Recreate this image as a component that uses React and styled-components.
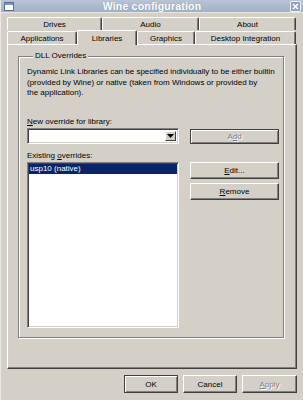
import React from 'react';
import styled, { createGlobalStyle } from 'styled-components';

const GlobalStyle = createGlobalStyle`
  html, body { margin: 0; padding: 0; background: #d4d0c8; }
  * { box-sizing: border-box; }
`;

const FONT = '"Liberation Sans", Arial, sans-serif';

function App() {
    return (
        <>
            <GlobalStyle />
            <Window>
                <TitleBar>
                    <WinIcon>
                        <svg width="10" height="9" viewBox="0 0 10 9">
                            <rect x="0.5" y="0.5" width="9" height="8" fill="#fff" stroke="#5a6f94" />
                            <rect x="1" y="1" width="8" height="2" fill="#7e93b8" />
                        </svg>
                    </WinIcon>
                    <Title>Wine configuration</Title>
                    <CloseBox>
                        <svg width="9" height="9" viewBox="0 0 9 9">
                            <path d="M2 2 L7 7 M7 2 L2 7" stroke="#fff" strokeWidth="1.6" />
                        </svg>
                    </CloseBox>
                </TitleBar>

                <Body>
                    <TabRow>
                        <Tab $w={95}>Drives</Tab>
                        <Tab $w={97}>Audio</Tab>
                        <Tab $w={97}>About</Tab>
                    </TabRow>
                    <TabRow $second>
                        <Tab $w={70}>Applications</Tab>
                        <Tab $w={60} $active>Libraries</Tab>
                        <Tab $w={58}>Graphics</Tab>
                        <Tab $w={101}>Desktop Integration</Tab>
                    </TabRow>

                    <Panel>
                        <GroupBox>
                            <Legend>DLL Overrides</Legend>
                            <Description>
                                Dynamic Link Libraries can be specified individually to be either builtin<br />
                                (provided by Wine) or native (taken from Windows or provided by<br />
                                the application).
                            </Description>

                            <FieldLabel $top={18}><u>N</u>ew override for library:</FieldLabel>
                            <FormRow>
                                <Combo>
                                    <ComboInput />
                                    <ComboArrow>
                                        <svg width="7" height="4" viewBox="0 0 7 4">
                                            <path d="M0 0 H7 L3.5 4 Z" fill="#000" />
                                        </svg>
                                    </ComboArrow>
                                </Combo>
                                <Button $h={15} $default $disabled>A<u>d</u>d</Button>
                            </FormRow>

                            <FieldLabel $top={7}>Existing <u>o</u>verrides:</FieldLabel>
                            <ListRow>
                                <ListBox>
                                    <ListItem $selected>usp10 (native)</ListItem>
                                </ListBox>
                                <ButtonColumn>
                                    <Button $h={17}><u>E</u>dit...</Button>
                                    <Button $h={17}><u>R</u>emove</Button>
                                </ButtonColumn>
                            </ListRow>
                        </GroupBox>
                    </Panel>

                    <Footer>
                        <Button $w={54} $h={18} $default>OK</Button>
                        <Button $w={54} $h={18}>Cancel</Button>
                        <Button $w={55} $h={18} $disabled><u>A</u>pply</Button>
                    </Footer>
                </Body>
            </Window>
        </>
    );
}

export default App;

// Style Components

const Window = styled.div`
    width: 303px;
    height: 400px;
    background: #d4d0c8;
    display: flex;
    flex-direction: column;
    font-family: ${FONT};
    font-size: 8px;
    color: #000;
    border-left: 1px solid #ece9e2;
    overflow: hidden;
`

const TitleBar = styled.div`
    height: 13px;
    display: flex;
    align-items: center;
    padding: 0 2px 0 3px;
    background: linear-gradient(#b9c5d6, #9fb0c8);
    border-bottom: 1px solid #e8e6e0;
`

const WinIcon = styled.div`
    width: 10px;
    display: flex;
`

const Title = styled.div`
    flex: 1;
    text-align: center;
    color: #fff;
    font-weight: bold;
    font-size: 10.5px;
    letter-spacing: 0.2px;
    text-shadow: 0 0 1px #7d8da6;
`

const CloseBox = styled.div`
    width: 11px;
    height: 11px;
    display: flex;
    align-items: center;
    justify-content: center;
    background: #8ea2c4;
    border: 1px solid #eef2f8;
    border-radius: 1px;
`

const Body = styled.div`
    flex: 1;
    display: flex;
    flex-direction: column;
    padding: 4px 6px 0 6px;
`

const TabRow = styled.div`
    display: flex;
    height: ${p => (p.$second ? 14 : 13)}px;
    align-items: flex-end;
`

const Tab = styled.div`
    width: ${p => p.$w}px;
    height: ${p => (p.$active ? 15 : 13)}px;
    margin-bottom: ${p => (p.$active ? -1 : 0)}px;
    position: relative;
    z-index: ${p => (p.$active ? 2 : 1)};
    display: flex;
    align-items: center;
    justify-content: center;
    background: #d4d0c8;
    border-top: 1px solid #fff;
    border-left: 1px solid #fff;
    border-right: 1px solid #404040;
    box-shadow: inset -1px 0 #808080;
    border-radius: 2px 2px 0 0;
    white-space: nowrap;
`

const Panel = styled.div`
    width: 290px;
    height: 325px;
    display: flex;
    flex-direction: column;
    padding: 11px 12px 30px 10px;
    border-top: 1px solid #fff;
    border-left: 1px solid #fff;
    border-right: 1px solid #404040;
    border-bottom: 1px solid #404040;
    box-shadow: inset -1px -1px #808080;
`

const GroupBox = styled.div`
    flex: 1;
    padding: 0 5px 0 8px;
    border: 1px solid #808080;
    box-shadow: 1px 1px #fff, inset 1px 1px #fff;
    display: flex;
    flex-direction: column;
`

const Legend = styled.div`
    align-self: flex-start;
    margin: -6px 0 0 6px;
    padding: 0 2px;
    height: 10px;
    line-height: 10px;
    background: #d4d0c8;
`

const Description = styled.p`
    margin: 6px 0 0 0;
    line-height: 10.5px;
    height: 32px;
    white-space: nowrap;
`

const FieldLabel = styled.div`
    margin-top: ${p => p.$top}px;
    line-height: 10px;
    height: 11px;
`

const FormRow = styled.div`
    display: grid;
    grid-template-columns: 152px 89px;
    column-gap: 11px;
    align-items: start;
`

const Combo = styled.div`
    height: 16px;
    display: flex;
    background: #fff;
    border: 1px solid;
    border-color: #808080 #fff #fff #808080;
    box-shadow: inset 1px 1px #404040, inset -1px -1px #d4d0c8;
    padding: 2px;
`

const ComboInput = styled.div`
    flex: 1;
`

const ComboArrow = styled.div`
    width: 11px;
    display: flex;
    align-items: center;
    justify-content: center;
    background: #d4d0c8;
    border: 1px solid;
    border-color: #fff #404040 #404040 #fff;
`

const ListRow = styled.div`
    flex: 1;
    display: grid;
    grid-template-columns: 152px 89px;
    column-gap: 11px;
    margin-bottom: 9px;
`

const ListBox = styled.div`
    background: #fff;
    border: 1px solid;
    border-color: #808080 #fff #fff #808080;
    box-shadow: inset 1px 1px #404040, inset -1px -1px #d4d0c8;
    padding: 1px;
`

const ListItem = styled.div`
    height: 10px;
    line-height: 10px;
    padding-left: 1px;
    background: ${p => (p.$selected ? '#0a246a' : 'transparent')};
    color: ${p => (p.$selected ? '#fff' : '#000')};
`

const ButtonColumn = styled.div`
    display: flex;
    flex-direction: column;
    gap: 4px;
`

const Button = styled.div`
    width: ${p => (p.$w ? `${p.$w}px` : 'auto')};
    height: ${p => p.$h}px;
    margin-top: ${p => (p.$h === 15 ? 1 : 0)}px;
    display: flex;
    align-items: center;
    justify-content: center;
    background: #d4d0c8;
    border: 1px solid;
    border-color: ${p => (p.$default ? '#404040' : '#fff #404040 #404040 #fff')};
    box-shadow: ${p =>
        p.$default
            ? 'inset 1px 1px #fff, inset -1px -1px #808080'
            : 'inset -1px -1px #808080'};
    color: ${p => (p.$disabled ? '#808080' : '#000')};
    text-shadow: ${p => (p.$disabled ? '1px 1px #fff' : 'none')};
`

const Footer = styled.div`
    display: flex;
    justify-content: flex-end;
    gap: 5px;
    padding: 6px 0 0 0;
`
